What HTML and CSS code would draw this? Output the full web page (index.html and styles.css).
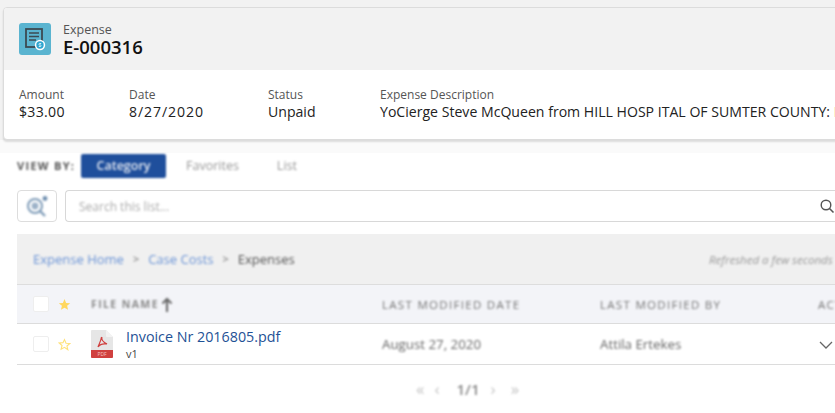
FILE: index.html
```html
<!DOCTYPE html>
<html lang="en">
<head>
<meta charset="utf-8">
<title>Expense E-000316</title>
<link rel="stylesheet" href="styles.css">
</head>
<body>
<div class="page">
  <div class="top">
  <section class="card">
    <header class="card-head">
      <svg class="rec-icon" width="32" height="32" viewBox="0 0 32 32">
        <rect width="32" height="32" rx="3" fill="#5AB4D0"/>
        <rect x="7" y="6" width="16" height="18" fill="none" stroke="#3c4a52" stroke-width="1.8"/>
        <path d="M10 10h10M10 13.5h10M10 17h7" stroke="#3c4a52" stroke-width="1.6"/>
        <circle cx="21" cy="22" r="5.2" fill="#fff"/>
        <circle cx="21" cy="22" r="3.7" fill="#2fa6d0"/>
        <path d="M22.2 20.5h-1.8a.8.8 0 0 0 0 1.5h1.2a.8.8 0 0 1 0 1.5h-1.8" fill="none" stroke="#fff" stroke-width=".8"/>
      </svg>
      <div class="titles">
        <div class="obj">Expense</div>
        <div class="rec">E-000316</div>
      </div>
    </header>
    <div class="fields">
      <div class="field f-amount"><div class="lab">Amount</div><div class="val num">$33.00</div></div>
      <div class="field f-date"><div class="lab">Date</div><div class="val date">8/27/2020</div></div>
      <div class="field f-status"><div class="lab">Status</div><div class="val">Unpaid</div></div>
      <div class="field f-desc"><div class="lab">Expense Description</div><div class="val">YoCierge Steve McQueen from HILL HOSP ITAL OF SUMTER COUNTY: Invoice</div></div>
    </div>
  </section>
  </div>
  <div class="band"></div>

  <section class="files">
    <div class="viewby blur">
      <span class="vb-label">VIEW BY:</span>
      <span class="tab active">Category</span>
      <span class="tab">Favorites</span>
      <span class="tab">List</span>
    </div>
    <div class="searchrow">
      <button class="icon-btn" type="button">
        <svg class="blur" width="24" height="24" viewBox="0 0 24 24" fill="none">
          <circle cx="10" cy="12" r="7" stroke="#7f9cb8" stroke-width="2"/>
          <circle cx="10" cy="12" r="3.4" fill="#9db2c8"/>
          <path d="M15 17l5 5" stroke="#7f9cb8" stroke-width="2.4"/>
          <circle cx="20" cy="4.500" r="2.400" fill="#6f8fb0"/>
        </svg>
      </button>
      <div class="search">
        <span class="placeholder blur">Search this list...</span>
        <svg class="mag" width="16" height="16" viewBox="0 0 16 16" fill="none">
          <circle cx="7" cy="7" r="4.800" stroke="#555" stroke-width="1.400"/>
          <path d="M10.500 10.500l4 4" stroke="#555" stroke-width="1.600"/>
        </svg>
      </div>
    </div>
    <div class="crumbs">
      <div class="crumb-list blur">
        <a>Expense Home</a><span class="sep">&gt;</span><a>Case Costs</a><span class="sep">&gt;</span><span class="cur">Expenses</span>
      </div>
      <div class="refreshed blur">Refreshed a few seconds ago</div>
    </div>
    <div class="row head">
      <span class="check"></span>
      <svg class="star" width="13" height="13" viewBox="0 0 24 24"><path d="M12 2l3 7 7.500.6-5.700 4.900 1.800 7.300L12 18l-6.600 3.800 1.800-7.300L1.500 9.600 9 9z" fill="#FFD75E"/></svg>
      <span class="th blur file-th">FILE NAME<svg class="arrow" width="12" height="15" viewBox="0 0 12 15" fill="none"><path d="M6 15V2M1.500 6.500L6 2l4.500 4.500" stroke="#666" stroke-width="2"/></svg></span>
      <span class="th blur">LAST MODIFIED DATE</span>
      <span class="th blur">LAST MODIFIED BY</span>
      <span class="th blur">ACTIONS</span>
    </div>
    <div class="row body-row">
      <span class="check"></span>
      <svg class="star" width="13" height="13" viewBox="0 0 24 24"><path d="M12 3l2.800 6.600 7 .6-5.300 4.600 1.700 6.900L12 17.200l-6.200 3.500 1.700-6.900-5.300-4.600 7-.6z" fill="none" stroke="#FFE27A" stroke-width="2"/></svg>
      <div class="file-cell">
        <svg width="22" height="28" viewBox="0 0 22 28">
          <path d="M1 0h14l7 7v20a1 1 0 0 1-1 1H1a1 1 0 0 1-1-1V1a1 1 0 0 1 1-1z" fill="#e6e6e6"/>
          <path d="M15 0l7 7h-6a1 1 0 0 1-1-1z" fill="#f3f3f3"/>
          <path d="M0 20h22v7a1 1 0 0 1-1 1H1a1 1 0 0 1-1-1z" fill="#D0403F"/>
          <path d="M11 7c-1 3 1 5 5 7-3-.5-7 0-9 3 1-3 3-6 3.500-10" fill="none" stroke="#D0403F" stroke-width="1.200"/>
          <text x="11" y="26" class="pdf-label" text-anchor="middle">PDF</text>
        </svg>
        <div class="file-text">
          <a class="file-name">Invoice Nr 2016805.pdf</a>
          <span class="version">v1</span>
        </div>
      </div>
      <span class="td blur">August 27, 2020</span>
      <span class="td blur">Attila Ertekes</span>
      <svg class="chev" width="14" height="14" viewBox="0 0 14 14" fill="none"><path d="M1 4l6 6 6-6" stroke="#666" stroke-width="1.300"/></svg>
    </div>
    <div class="pager blur">
      <span class="pg">&laquo;</span><span class="pg">&lsaquo;</span><b>1/1</b><span class="pg next">&rsaquo;</span><span class="pg">&raquo;</span>
    </div>
  </section>
</div>
</body>
</html>
```

FILE: styles.css
```css
* { box-sizing: border-box; }
html, body { margin: 0; height: 413px; overflow: hidden; }
body { background: #fff; font-family: "Open Sans", "Liberation Sans", sans-serif; color: #1a1a1a; }
.page { width: 835px; height: 413px; overflow: hidden; background: #fff; }
.blur { filter: blur(1.100px); }

.top { height: 140px; background: #f2f2f2; padding: 7px 0 0 3px; }
.band { height: 13px; background: #fafafa; }
.card { position: relative; width: 860px; height: 133px; background: #fff; border: 1px solid #dcdcdc; border-radius: 4px; box-shadow: 0 2px 2px rgba(0,0,0,.12); overflow: hidden; }
.card-head { height: 62px; background: #f2f2f2; display: flex; align-items: center; padding: 0 0 2px 15px; gap: 12px; }
.rec-icon { flex: none; margin-top: 2px; }
.obj { font-size: 12.500px; line-height: 16px; color: #555; }
.rec { font-size: 18.500px; line-height: 17px; font-weight: 600; color: #111; }
.fields { display: flex; padding: 16px 0 0 15px; }
.field { flex: none; white-space: nowrap; }
.f-amount { width: 110px; }
.f-date { width: 139px; }
.f-status { width: 112px; }
.lab { font-size: 12px; line-height: 17px; color: #555; }
.val { font-size: 14.100px; line-height: 18px; color: #222; }
.num { letter-spacing: .3px; }
.date { letter-spacing: .9px; }

.files { margin: 0 0 0 5px; height: 260px; width: 830px; background: #fff; padding: 0 0 0 12px; }
.viewby { display: flex; align-items: center; height: 25px; }
.vb-label { font-size: 11px; font-weight: 700; letter-spacing: 1.300px; color: #555; width: 64px; white-space: nowrap; }
.tab { font-size: 12.500px; color: #999; padding: 0 16px; height: 24px; line-height: 23px; border-radius: 2px; margin-right: 4px; }
.tab.active { background: #1f4f9c; color: #e3e8f2; font-weight: 600; width: 85px; text-align: center; padding: 0; margin-right: 4px; }
.tab + .tab + .tab { padding-left: 18px; }

.searchrow { display: flex; gap: 8px; margin-top: 12px; height: 32px; }
.icon-btn { width: 40px; height: 32px; padding: 0; background: #fff; border: 1px solid #ddd; border-radius: 4px; display: flex; align-items: center; justify-content: center; }
.search { flex: 1; display: flex; align-items: center; justify-content: space-between; border: 1px solid #d8d8d8; border-right: 0; border-radius: 4px 0 0 4px; padding: 0 0 0 13px; }
.placeholder { font-size: 12px; color: #aaa; }
.mag { margin-right: 0; flex: none; }

.crumbs { margin-top: 12px; height: 51px; background: #f0f0f0; display: flex; align-items: center; justify-content: space-between; padding: 0 0 0 16px; border-bottom: 1px solid #ddd; white-space: nowrap; }
.crumb-list { font-size: 13px; display: flex; gap: 9px; }
.crumb-list a { color: #6b94d6; }
.sep { color: #888; font-size: 11px; line-height: 18px; font-weight: 600; }
.cur { color: #555; }
.refreshed { font-size: 11.500px; font-style: italic; color: #999; width: 126px; overflow: hidden; }

.row { display: grid; grid-template-columns: 25px 33px 291px 218px 218px 60px; align-items: center; padding-left: 16px; border-bottom: 1px solid #dcdcdc; }
.row.head { height: 39px; background: #f3f4f8; }
.row.body-row { height: 41px; }
.check { width: 16px; height: 16px; background: #fff; border: 1px solid #eee; border-radius: 2px; filter: blur(.6px); }
.star { display: block; }
.th { font-size: 11.500px; letter-spacing: 1.300px; color: #777; white-space: nowrap; }
.file-th { display: flex; align-items: center; gap: 2px; font-weight: 700; color: #8a8a8a; font-size: 10.500px; letter-spacing: 1.400px; }
.arrow { flex: none; }
.file-cell { display: flex; align-items: center; gap: 13px; }
.file-text { display: flex; flex-direction: column; padding-top: 2px; }
.file-name { font-size: 14.300px; line-height: 18px; color: #1f5296; }
.version { font-size: 11px; line-height: 16px; color: #444; }
.pdf-label { font-size: 5px; fill: #f3c0c0; font-family: "Open Sans", sans-serif; }
.td { font-size: 13.300px; color: #666; }
.chev { display: block; margin-left: 1px; margin-top: 1px; }

.pager { display: flex; align-items: center; gap: 10px; margin: 14px 0 0 399px; font-size: 17px; line-height: 20px; color: #c4c4c4; white-space: nowrap; }
.pager b { color: #888; font-size: 15px; margin: 0 1px 0 7px; font-weight: 600; }
.next { margin-right: 5px; }
```
